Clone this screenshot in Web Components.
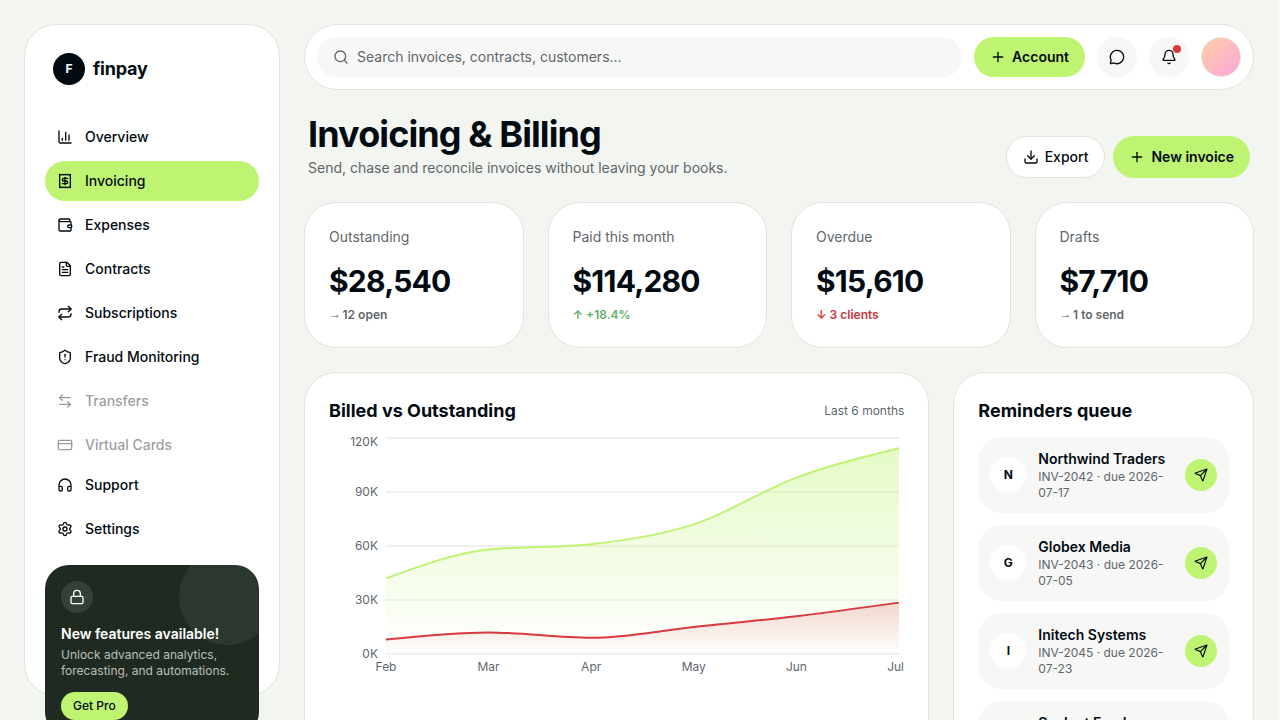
<!DOCTYPE html>
<html lang="en">
<head>
<meta charset="utf-8">
<title>finpay - Invoicing &amp; Billing</title>
<style>
  :root {
    --bg: #f3f5f0;
    --ink: #020b12;
    --muted: #5f676c;
    --line: #e2e4df;
    --soft: #f7f7f5;
    --lime: #bff372;
    --red: #d93a3e;
    --green: #5fae68;
    --forest: #1f2b21;
  }
  html { background: #fafafa; }
  body {
    margin: 0;
    height: 720px;
    overflow: hidden;
    color: var(--ink);
    font: 400 14px/20px Inter, "Liberation Sans", sans-serif;
  }
</style>
</head>
<body>

<fp-app>
  <fp-sidebar slot="sidebar">
    <fp-nav-item icon="chart">Overview</fp-nav-item>
    <fp-nav-item icon="receipt" active>Invoicing</fp-nav-item>
    <fp-nav-item icon="wallet">Expenses</fp-nav-item>
    <fp-nav-item icon="file">Contracts</fp-nav-item>
    <fp-nav-item icon="repeat">Subscriptions</fp-nav-item>
    <fp-nav-item icon="shield">Fraud Monitoring</fp-nav-item>
    <fp-nav-item icon="swap" disabled>Transfers</fp-nav-item>
    <fp-nav-item icon="card" disabled>Virtual Cards</fp-nav-item>
    <fp-nav-item slot="footer" icon="headphones">Support</fp-nav-item>
    <fp-nav-item slot="footer" icon="settings">Settings</fp-nav-item>
    <fp-promo slot="promo">
      <span slot="title">New features available!</span>
      Unlock advanced analytics, forecasting, and automations.
      <span slot="action">Get Pro</span>
    </fp-promo>
  </fp-sidebar>

  <fp-topbar placeholder="Search invoices, contracts, customers..."></fp-topbar>

  <fp-page-header heading="Invoicing &amp; Billing" text="Send, chase and reconcile invoices without leaving your books.">
    <fp-button icon="download" variant="outline" class="tall">Export</fp-button>
    <fp-button icon="plus" class="tall">New invoice</fp-button>
  </fp-page-header>

  <fp-grid cols="4">
    <fp-stat label="Outstanding" value="$28,540" trend="flat">12 open</fp-stat>
    <fp-stat label="Paid this month" value="$114,280" trend="up">+18.4%</fp-stat>
    <fp-stat label="Overdue" value="$15,610" trend="down">3 clients</fp-stat>
    <fp-stat label="Drafts" value="$7,710" trend="flat">1 to send</fp-stat>
  </fp-grid>

  <fp-grid cols="3">
    <fp-panel heading="Billed vs Outstanding" wide>
      <span slot="note">Last 6 months</span>
      <fp-area-chart></fp-area-chart>
    </fp-panel>
    <fp-panel heading="Reminders queue">
      <fp-reminder name="Northwind Traders">INV-2042 · due 2026-07-17</fp-reminder>
      <fp-reminder name="Globex Media">INV-2043 · due 2026-07-05</fp-reminder>
      <fp-reminder name="Initech Systems">INV-2045 · due 2026-07-23</fp-reminder>
      <fp-reminder name="Soylent Foods">INV-2046 · due 2026-07-28</fp-reminder>
    </fp-panel>
  </fp-grid>
</fp-app>

<script>
const ICONS = {
  chart: '<path d="M3 3v16a2 2 0 0 0 2 2h16"/><path d="M18 17V9"/><path d="M13 17V5"/><path d="M8 17v-3"/>',
  receipt: '<path d="M4 2v20l2-1 2 1 2-1 2 1 2-1 2 1 2-1 2 1V2l-2 1-2-1-2 1-2-1-2 1-2-1-2 1Z"/><path d="M16 8h-6a2 2 0 1 0 0 4h4a2 2 0 1 1 0 4H8"/><path d="M12 17.5v-11"/>',
  wallet: '<path d="M19 7V4a1 1 0 0 0-1-1H5a2 2 0 0 0 0 4h15a1 1 0 0 1 1 1v4h-3a2 2 0 0 0 0 4h3a1 1 0 0 0 1-1v-2a1 1 0 0 0-1-1"/><path d="M3 5v14a2 2 0 0 0 2 2h15a1 1 0 0 0 1-1v-4"/>',
  file: '<path d="M15 2H6a2 2 0 0 0-2 2v16a2 2 0 0 0 2 2h12a2 2 0 0 0 2-2V7Z"/><path d="M14 2v4a2 2 0 0 0 2 2h4"/><path d="M10 9H8"/><path d="M16 13H8"/><path d="M16 17H8"/>',
  repeat: '<path d="m17 2 4 4-4 4"/><path d="M3 11v-1a4 4 0 0 1 4-4h14"/><path d="m7 22-4-4 4-4"/><path d="M21 13v1a4 4 0 0 1-4 4H3"/>',
  shield: '<path d="M20 13c0 5-3.5 7.5-7.66 8.95a1 1 0 0 1-.67-.01C7.5 20.5 4 18 4 13V6a1 1 0 0 1 1-1c2 0 4.5-1.2 6.24-2.72a1.17 1.17 0 0 1 1.52 0C14.51 3.81 17 5 19 5a1 1 0 0 1 1 1z"/><path d="M12 8v4"/><path d="M12 16h.01"/>',
  swap: '<path d="M8 3 4 7l4 4"/><path d="M4 7h16"/><path d="m16 21 4-4-4-4"/><path d="M20 17H4"/>',
  card: '<rect width="20" height="14" x="2" y="5" rx="2"/><path d="M2 10h20"/>',
  headphones: '<path d="M3 14h3a2 2 0 0 1 2 2v3a2 2 0 0 1-2 2H5a2 2 0 0 1-2-2v-7a9 9 0 0 1 18 0v7a2 2 0 0 1-2 2h-1a2 2 0 0 1-2-2v-3a2 2 0 0 1 2-2h3"/>',
  settings: '<path d="M9.671 4.136a2.34 2.34 0 0 1 4.659 0 2.34 2.34 0 0 0 3.319 1.915 2.34 2.34 0 0 1 2.33 4.033 2.34 2.34 0 0 0 0 3.831 2.34 2.34 0 0 1-2.33 4.033 2.34 2.34 0 0 0-3.319 1.915 2.34 2.34 0 0 1-4.659 0 2.34 2.34 0 0 0-3.32-1.915 2.34 2.34 0 0 1-2.33-4.033 2.34 2.34 0 0 0 0-3.831A2.34 2.34 0 0 1 6.35 6.051a2.34 2.34 0 0 0 3.319-1.915"/><circle cx="12" cy="12" r="3"/>',
  lock: '<rect width="18" height="11" x="3" y="11" rx="2"/><path d="M7 11V7a5 5 0 0 1 10 0v4"/>',
  search: '<path d="m21 21-4.34-4.34"/><circle cx="11" cy="11" r="8"/>',
  plus: '<path d="M5 12h14"/><path d="M12 5v14"/>',
  message: '<path d="M2.992 16.342a2 2 0 0 1 .094 1.167l-1.065 3.29a1 1 0 0 0 1.236 1.168l3.413-.998a2 2 0 0 1 1.099.092 10 10 0 1 0-4.777-4.719"/>',
  bell: '<path d="M10.268 21a2 2 0 0 0 3.464 0"/><path d="M3.262 15.326A1 1 0 0 0 4 17h16a1 1 0 0 0 .74-1.673C19.41 13.956 18 12.499 18 8A6 6 0 0 0 6 8c0 4.499-1.411 5.956-2.738 7.326"/>',
  download: '<path d="M12 15V3"/><path d="M21 15v4a2 2 0 0 1-2 2H5a2 2 0 0 1-2-2v-4"/><path d="m7 10 5 5 5-5"/>',
  send: '<path d="M14.536 21.686a.5.5 0 0 0 .937-.024l6.5-19a.496.496 0 0 0-.635-.635l-19 6.5a.5.5 0 0 0-.024.937l7.93 3.18a2 2 0 0 1 1.112 1.11z"/><path d="m21.854 2.147-10.94 10.939"/>'
};

// Every element renders its own markup once into an open root
class FpElement extends HTMLElement {
  constructor() {
    super();
    this.root = this.attachShadow({ mode: "open" });
  }

  connectedCallback() {
    this.root.innerHTML = `<style>${this.styles()}</style>${this.render()}`;
  }

  attr(name) {
    return this.getAttribute(name) || "";
  }

  styles() { return ""; }
  render() { return "<slot></slot>"; }
}

class FpIcon extends FpElement {
  styles() {
    const size = this.attr("size") || 16;
    return `
      :host { display: block; flex: none; width: ${size}px; height: ${size}px; }
      svg { display: block; width: 100%; height: 100%; }
    `;
  }
  render() {
    return `<svg viewBox="0 0 24 24" fill="none" stroke="currentColor" stroke-width="2"
      stroke-linecap="round" stroke-linejoin="round">${ICONS[this.attr("name")]}</svg>`;
  }
}

class FpApp extends FpElement {
  styles() {
    return `
      :host {
        display: grid;
        grid-template-columns: 256px 950px;
        gap: 24px;
        box-sizing: border-box;
        width: 1278px;
        height: 720px;
        padding: 24px;
        background: var(--bg);
      }
      main { display: flex; flex-direction: column; gap: 24px; min-width: 0; }
    `;
  }
  render() {
    return `<slot name="sidebar"></slot><main><slot></slot></main>`;
  }
}

class FpSidebar extends FpElement {
  styles() {
    return `
      :host {
        display: flex;
        flex-direction: column;
        box-sizing: border-box;
        height: 672px;
        padding: 20px;
        border: 1px solid var(--line);
        border-radius: 32px;
        background: #fff;
      }
      .brand { display: flex; align-items: center; gap: 8px; padding: 8px; margin-bottom: 24px; }
      .mark {
        display: grid;
        place-items: center;
        width: 32px;
        height: 32px;
        border-radius: 50%;
        background: var(--ink);
        color: #fff;
        font-size: 12px;
        font-weight: 700;
      }
      .name { font-size: 18px; font-weight: 700; letter-spacing: -0.2px; }
      nav { display: flex; flex-direction: column; gap: 4px; }
      .promo { margin-top: 16px; }
    `;
  }
  render() {
    return `
      <div class="brand"><span class="mark">F</span><span class="name">finpay</span></div>
      <nav><slot></slot></nav>
      <nav><slot name="footer"></slot></nav>
      <div class="promo"><slot name="promo"></slot></div>
    `;
  }
}

class FpNavItem extends FpElement {
  styles() {
    return `
      :host {
        display: flex;
        align-items: center;
        gap: 12px;
        height: 40px;
        padding: 0 12px;
        border-radius: 20px;
        font-weight: 500;
      }
      :host([active]) { background: var(--lime); }
      :host([disabled]) { opacity: 0.4; }
    `;
  }
  render() {
    return `<fp-icon name="${this.attr("icon")}"></fp-icon><span><slot></slot></span>`;
  }
}

class FpPromo extends FpElement {
  styles() {
    return `
      :host {
        display: block;
        position: relative;
        overflow: hidden;
        padding: 16px;
        border-radius: 24px;
        background: var(--forest);
        color: #fff;
      }
      .glow {
        position: absolute;
        top: -16px;
        right: -16px;
        width: 96px;
        height: 96px;
        border-radius: 50%;
        background: rgba(255, 255, 255, 0.06);
      }
      .body { position: relative; }
      .lock {
        display: grid;
        place-items: center;
        width: 32px;
        height: 32px;
        margin-bottom: 12px;
        border-radius: 50%;
        background: rgba(255, 255, 255, 0.1);
      }
      .title { height: 18px; line-height: 18px; font-weight: 600; margin-bottom: 4px; }
      .text { font-size: 12px; line-height: 16px; color: rgba(255, 255, 255, 0.7); }
      .action {
        display: inline-block;
        margin-top: 13px;
        padding: 0 12px;
        border-radius: 14px;
        background: var(--lime);
        color: var(--ink);
        font-size: 12px;
        font-weight: 500;
        line-height: 28px;
      }
    `;
  }
  render() {
    return `
      <div class="glow"></div>
      <div class="body">
        <div class="lock"><fp-icon name="lock"></fp-icon></div>
        <div class="title"><slot name="title"></slot></div>
        <div class="text"><slot></slot></div>
        <span class="action"><slot name="action"></slot></span>
      </div>
    `;
  }
}

class FpButton extends FpElement {
  styles() {
    return `
      :host {
        display: inline-flex;
        align-items: center;
        gap: 6px;
        box-sizing: border-box;
        height: 40px;
        padding: 0 16px;
        border-radius: 21px;
        background: var(--lime);
        font-weight: 600;
        white-space: nowrap;
      }
      :host(.tall) { height: 42px; }
      :host([variant="outline"]) { border: 1px solid var(--line); background: #fff; font-weight: 500; }
    `;
  }
  render() {
    return `<fp-icon name="${this.attr("icon")}"></fp-icon><span><slot></slot></span>`;
  }
}

class FpTopbar extends FpElement {
  styles() {
    return `
      :host {
        display: flex;
        align-items: center;
        gap: 12px;
        box-sizing: border-box;
        height: 66px;
        padding: 12px;
        border: 1px solid var(--line);
        border-radius: 33px;
        background: #fff;
      }
      .search {
        flex: 1;
        display: flex;
        align-items: center;
        gap: 8px;
        height: 40px;
        padding: 0 16px;
        border-radius: 20px;
        background: var(--soft);
        color: var(--muted);
      }
      .round {
        position: relative;
        display: grid;
        place-items: center;
        width: 40px;
        height: 40px;
        border-radius: 50%;
        background: var(--soft);
      }
      .dot {
        position: absolute;
        top: 8px;
        right: 8px;
        width: 8px;
        height: 8px;
        border-radius: 50%;
        background: var(--red);
      }
      .avatar {
        box-sizing: border-box;
        width: 40px;
        height: 40px;
        border: 1px solid var(--line);
        border-radius: 50%;
        background: linear-gradient(135deg, #ffcfa0, #faa6dc);
      }
    `;
  }
  render() {
    return `
      <div class="search"><fp-icon name="search"></fp-icon><span>${this.attr("placeholder")}</span></div>
      <fp-button icon="plus">Account</fp-button>
      <div class="round"><fp-icon name="message"></fp-icon></div>
      <div class="round"><fp-icon name="bell"></fp-icon><i class="dot"></i></div>
      <div class="avatar"></div>
    `;
  }
}

class FpPageHeader extends FpElement {
  styles() {
    return `
      :host { display: flex; align-items: flex-end; justify-content: space-between; height: 64px; padding: 0 4px; }
      h1 { margin: 0 0 4px; font-size: 36px; line-height: 40px; font-weight: 700; letter-spacing: -0.9px; }
      p { margin: 0; color: var(--muted); }
      .actions { display: flex; gap: 8px; }
    `;
  }
  render() {
    return `
      <div><h1>${this.attr("heading")}</h1><p>${this.attr("text")}</p></div>
      <div class="actions"><slot></slot></div>
    `;
  }
}

class FpGrid extends FpElement {
  styles() {
    return `
      :host {
        display: grid;
        grid-template-columns: repeat(${this.attr("cols")}, minmax(0, 1fr));
        gap: 24px;
      }
    `;
  }
}

class FpStat extends FpElement {
  styles() {
    return `
      :host {
        display: block;
        box-sizing: border-box;
        height: 146px;
        padding: 24px;
        border: 1px solid var(--line);
        border-radius: 32px;
        background: #fff;
      }
      .label { color: var(--muted); }
      .value { margin: 16px 0 8px; font-size: 30px; line-height: 36px; font-weight: 700; letter-spacing: -0.77px; }
      .delta { height: 16px; color: var(--muted); font-size: 12px; line-height: 16px; font-weight: 600; }
      :host([trend="up"]) .delta { color: var(--green); }
      :host([trend="down"]) .delta { color: #c9363a; }
      :host([trend="flat"]) .arrow {
        display: inline-block;
        width: 10.5px;
        font-family: "Liberation Sans", sans-serif;
        line-height: 12px;
        vertical-align: 1px;
      }
    `;
  }
  render() {
    const arrows = { flat: "→", up: "↑", down: "↓" };
    return `
      <div class="label">${this.attr("label")}</div>
      <div class="value">${this.attr("value")}</div>
      <div class="delta"><span class="arrow">${arrows[this.attr("trend")]}</span> <slot></slot></div>
    `;
  }
}

class FpPanel extends FpElement {
  styles() {
    return `
      :host {
        display: block;
        box-sizing: border-box;
        height: 440px;
        padding: 24px;
        border: 1px solid var(--line);
        border-radius: 32px;
        background: #fff;
      }
      :host([wide]) { grid-column: span 2; }
      header { display: flex; align-items: center; justify-content: space-between; margin-bottom: 12px; }
      h2 { margin: 0; font-size: 18px; line-height: 28px; font-weight: 700; }
      .note { color: var(--muted); font-size: 12px; line-height: 16px; }
      .content { display: flex; flex-direction: column; gap: 12px; }
    `;
  }
  render() {
    return `
      <header><h2>${this.attr("heading")}</h2><span class="note"><slot name="note"></slot></span></header>
      <div class="content"><slot></slot></div>
    `;
  }
}

class FpReminder extends FpElement {
  styles() {
    return `
      :host {
        display: flex;
        align-items: center;
        gap: 12px;
        padding: 12px;
        border-radius: 24px;
        background: var(--soft);
      }
      .initial, .send { flex: none; display: grid; place-items: center; border-radius: 50%; }
      .initial { width: 36px; height: 36px; background: #fff; font-size: 12px; font-weight: 700; }
      .send { width: 32px; height: 32px; background: var(--lime); }
      .info { flex: 1; min-width: 0; }
      .name { font-weight: 600; white-space: nowrap; }
      .due { color: var(--muted); font-size: 12px; line-height: 16px; }
    `;
  }
  render() {
    const name = this.attr("name");
    return `
      <span class="initial">${name[0]}</span>
      <div class="info"><div class="name">${name}</div><div class="due"><slot></slot></div></div>
      <span class="send"><fp-icon name="send" size="14"></fp-icon></span>
    `;
  }
}

class FpAreaChart extends FpElement {
  styles() {
    return `
      :host { display: block; height: 240px; }
      svg { display: block; overflow: visible; }
      text { fill: var(--muted); font-size: 12px; }
    `;
  }

  // Monotone cubic through evenly spaced points
  curve(points) {
    const n = points.length;
    const dx = points[1][0] - points[0][0];
    const slope = points.slice(1).map((p, i) => (p[1] - points[i][1]) / dx);
    const t = points.map((p, i) => {
      if (i === 0 || i === n - 1) return 0;
      const a = slope[i - 1];
      const b = slope[i];
      return (Math.sign(a) + Math.sign(b)) * Math.min(Math.abs(a), Math.abs(b), Math.abs(a + b) / 4) || 0;
    });
    t[0] = (3 * slope[0] - t[1]) / 2;
    t[n - 1] = (3 * slope[n - 2] - t[n - 2]) / 2;
    let d = `M${points[0]}`;
    for (let i = 1; i < n; i++) {
      const [x0, y0] = points[i - 1];
      const [x1, y1] = points[i];
      d += `C${x0 + dx / 3},${y0 + t[i - 1] * dx / 3} ${x1 - dx / 3},${y1 - t[i] * dx / 3} ${x1},${y1}`;
    }
    return d;
  }

  render() {
    const left = 57, right = 570, top = 1, bottom = 217;
    const months = ["Feb", "Mar", "Apr", "May", "Jun", "Jul"];
    const step = (right - left) / 5;
    const y = v => bottom - v * (bottom - top) / 120;
    const series = [
      { id: "billed", color: "var(--lime)", alpha: 0.4, values: [42, 58, 61, 72, 98, 114.28] },
      { id: "open", color: "var(--red)", alpha: 0.2, values: [8, 12, 9, 15, 21, 28.54] }
    ];
    const grid = [0, 30, 60, 90, 120].map(v => `
      <line x1="${left}" x2="${right}" y1="${y(v)}" y2="${y(v)}" stroke="#000" stroke-opacity="0.12"/>
      <text x="${left - 8}" y="${(v === 120 ? y(v) + 3.5 : y(v)) + 4}" text-anchor="end">${v}K</text>`).join("");
    const labels = months.map((m, i) => `
      <text x="${i === 5 ? 575 : left + step * i}" y="${bottom + 17}" text-anchor="${i === 5 ? "end" : "middle"}">${m}</text>`).join("");
    const areas = series.map(s => {
      const d = this.curve(s.values.map((v, i) => [left + step * i, y(v)]));
      return `
        <linearGradient id="${s.id}" x1="0" y1="0" x2="0" y2="1">
          <stop offset="0" stop-color="${s.color}" stop-opacity="${s.alpha}"/>
          <stop offset="1" stop-color="${s.color}" stop-opacity="0"/>
        </linearGradient>
        <path d="${d}L${right},${bottom}L${left},${bottom}Z" fill="url(#${s.id})"/>
        <path d="${d}" fill="none" stroke="${s.color}" stroke-width="2"/>`;
    }).join("");
    return `<svg width="575" height="240">${grid}${areas}${labels}</svg>`;
  }
}

customElements.define("fp-icon", FpIcon);
customElements.define("fp-app", FpApp);
customElements.define("fp-sidebar", FpSidebar);
customElements.define("fp-nav-item", FpNavItem);
customElements.define("fp-promo", FpPromo);
customElements.define("fp-button", FpButton);
customElements.define("fp-topbar", FpTopbar);
customElements.define("fp-page-header", FpPageHeader);
customElements.define("fp-grid", FpGrid);
customElements.define("fp-stat", FpStat);
customElements.define("fp-panel", FpPanel);
customElements.define("fp-reminder", FpReminder);
customElements.define("fp-area-chart", FpAreaChart);
</script>
</body>
</html>
